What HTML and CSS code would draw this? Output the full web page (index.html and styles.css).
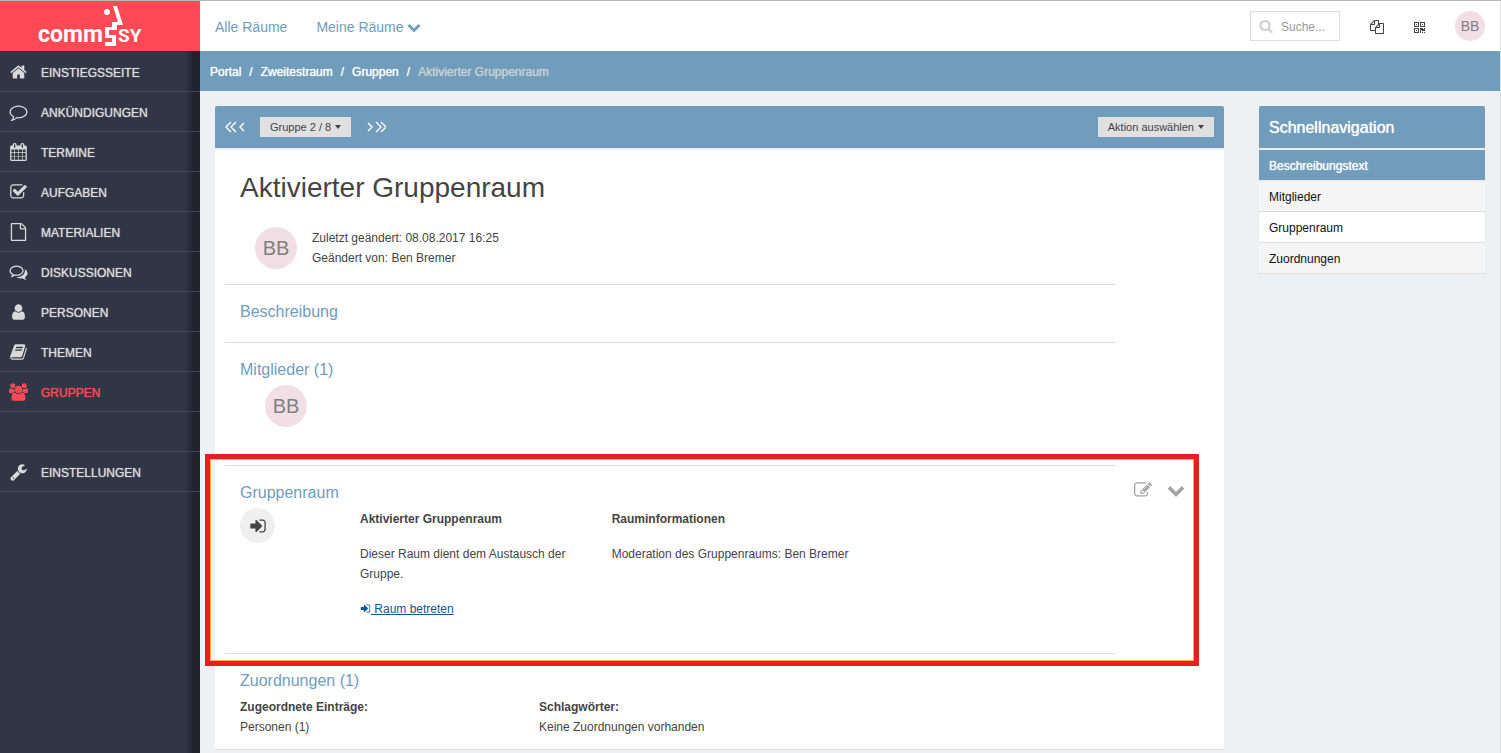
FILE: index.html
```html
<!DOCTYPE html>
<html lang="de">
<head>
<meta charset="utf-8">
<meta name="viewport" content="width=device-width, initial-scale=1">
<title>CommSy – Aktivierter Gruppenraum</title>
<link rel="stylesheet" href="styles.css">
</head>
<body>
<svg class="sprite" aria-hidden="true">
  <symbol id="home" viewBox="0 0 1792 1792"><path d="M1472 992v480q0 26-19 45t-45 19h-384v-384h-256v384h-384q-26 0-45-19t-19-45v-480q0-1 .5-3t.5-3l575-474 575 474q1 2 1 6zm223-69l-62 74q-8 9-21 11h-3q-13 0-21-7l-692-577-692 577q-12 8-24 7-13-2-21-11l-62-74q-8-10-7-23.500t11-21.500l719-599q32-26 76-26t76 26l244 204v-195q0-14 9-23t23-9h192q14 0 23 9t9 23v408l219 182q10 8 11 21.500t-7 23.500z"/></symbol>
  <symbol id="comment" viewBox="0 0 1792 1792"><path d="M896 384q-204 0-381.500 69.500t-282 187.500-104.500 255q0 112 71.500 213.500t201.500 175.500l87 50-27 96q-24 91-70 172 152-63 275-171l43-38 57 6q69 8 130 8 204 0 381.500-69.500t282-187.500 104.500-255-104.500-255-282-187.500-381.500-69.500zm896 512q0 174-120 321.500t-326 233-450 85.500q-70 0-145-8-198 175-460 242-49 14-114 22h-5q-15 0-27-10.500t-16-27.500v-1q-3-4-.5-12t2-10 4.500-9.500l6-9 7-8.500 8-9q7-8 31-34.500t34.500-38 31-39.500 32.500-51 27-59 26-76q-157-89-247.500-220t-90.500-281q0-174 120-321.500t326-233 450-85.500 450 85.500 326 233 120 321.500z"/></symbol>
  <symbol id="calendar" viewBox="0 0 1792 1792"><path d="M192 1664h288v-288h-288v288zm352 0h320v-288h-320v288zm-352-352h288v-320h-288v320zm352 0h320v-320h-320v320zm-352-384h288v-288h-288v288zm736 736h320v-288h-320v288zm-384-736h320v-288h-320v288zm768 736h288v-288h-288v288zm-384-352h320v-320h-320v320zm-352-864v-288q0-13-9.500-22.500t-22.500-9.500h-64q-13 0-22.500 9.500t-9.500 22.500v288q0 13 9.500 22.500t22.500 9.500h64q13 0 22.500-9.500t9.500-22.500zm736 864h288v-320h-288v320zm-384-384h320v-288h-320v288zm384 0h288v-288h-288v288zm32-480v-288q0-13-9.500-22.500t-22.500-9.500h-64q-13 0-22.500 9.500t-9.500 22.500v288q0 13 9.500 22.500t22.500 9.500h64q13 0 22.500-9.500t9.500-22.500zm384-64v1280q0 52-38 90t-90 38h-1408q-52 0-90-38t-38-90v-1280q0-52 38-90t90-38h128v-96q0-66 47-113t113-47h64q66 0 113 47t47 113v96h384v-96q0-66 47-113t113-47h64q66 0 113 47t47 113v96h128q52 0 90 38t38 90z"/></symbol>
  <symbol id="check" viewBox="0 0 1792 1792"><path d="M1472 930v318q0 119-84.500 203.500t-203.500 84.500h-832q-119 0-203.500-84.500t-84.500-203.500v-832q0-119 84.500-203.500t203.500-84.500h832q63 0 117 25 15 7 18 23 3 17-9 29l-49 49q-10 10-23 10-3 0-9-2-23-6-45-6h-832q-66 0-113 47t-47 113v832q0 66 47 113t113 47h832q66 0 113-47t47-113v-254q0-13 9-22l64-64q10-10 23-10 6 0 12 3 20 8 20 29zm231-489l-814 814q-24 24-57 24t-57-24l-430-430q-24-24-24-57t24-57l110-110q24-24 57-24t57 24l263 263 647-647q24-24 57-24t57 24l110 110q24 24 24 57t-24 57z"/></symbol>
  <symbol id="file" viewBox="0 0 1792 1792"><path d="M1596 380q28 28 48 76t20 88v1152q0 40-28 68t-68 28h-1344q-40 0-68-28t-28-68v-1600q0-40 28-68t68-28h896q40 0 88 20t76 48zm-444-244v376h376q-10-29-22-41l-313-313q-12-12-41-22zm384 1528v-1024h-416q-40 0-68-28t-28-68v-416h-768v1536h1280z"/></symbol>
  <symbol id="comments" viewBox="0 0 1792 1792"><path d="M704 384q-153 0-286 52t-211.500 141-78.500 191q0 82 53 158t149 132l97 56-35 84q34-20 62-39l44-31 53 10q78 14 153 14 153 0 286-52t211.500-141 78.500-191-78.500-191-211.500-141-286-52zm0-128q191 0 353.500 68.500t256.500 186.500 94 257-94 257-256.500 186.500-353.500 68.500q-86 0-176-16-124 88-278 128-36 9-86 16h-3q-11 0-20.500-8t-11.500-21q-1-3-1-6.500t.5-6.500 2-6l2.500-5 3.500-5.500 4-5 4.500-5 4-4.500q5-6 23-25t26-29.500 22.500-29 25-38.500 20.500-44q-124-72-195-177t-71-224q0-139 94-257t256.500-186.500 353.500-68.500zm822 1169q10 24 20.500 44t25 38.500 22.500 29 26 29.500 23 25q1 1 4 4.500t4.500 5 4 5 3.500 5.500l2.500 5 2 6 .5 6.500-1 6.500q-3 14-13 22t-22 7q-50-7-86-16-154-40-278-128-90 16-176 16-271 0-472-132 58 4 88 4 161 0 309-45t264-129q125-92 192-212t67-254q0-77-23-152 129 71 204 178t75 230q0 120-71 224.500t-195 176.500z"/></symbol>
  <symbol id="user" viewBox="0 0 1792 1792"><path d="M1536 1399q0 109-62.500 187t-150.500 78h-854q-88 0-150.500-78t-62.500-187q0-85 8.500-160.500t31.500-152 58.500-131 94-89 134.500-34.500q131 128 313 128t313-128q76 0 134.500 34.500t94 89 58.500 131 31.500 152 8.500 160.500zm-256-887q0 159-112.500 271.500t-271.500 112.500-271.500-112.500-112.500-271.500 112.500-271.500 271.500-112.500 271.500 112.500 112.500 271.500z"/></symbol>
  <symbol id="book" viewBox="0 0 1792 1792"><path d="M1703 478q40 57 18 129l-275 906q-19 64-76.500 107.500t-122.500 43.500h-923q-77 0-148.500-53.500t-99.500-131.500q-24-67-2-127 0-4 3-27t4-37q1-8-3-21.500t-3-19.500q2-11 8-21t16.500-23.500 16.500-23.500q23-38 45-91.500t30-91.500q3-10 .5-30t-.5-28q3-11 17-28t17-23q21-36 42-92t25-90q1-9-2.500-32t.5-28q4-13 22-30.500t22-22.500q19-26 42.500-84.500t27.500-96.500q1-8-3-25.500t-2-26.500q2-8 9-18t18-23 17-21q8-12 16.500-30.500t15-35 16-36 19.500-32 26.500-23.500 36-11.500 47.500 5.500l-1 3q38-9 51-9h761q74 0 114 56t18 130l-274 906q-36 119-71.500 153.500t-128.500 34.500h-869q-27 0-38 15-11 16-1 43 24 70 144 70h923q29 0 56-15.500t35-41.500l300-987q7-22 5-57 38 15 59 43zm-1064 2q-4 13 2 22.500t20 9.500h608q13 0 25.500-9.500t16.500-22.500l21-64q4-13-2-22.500t-20-9.500h-608q-13 0-25.500 9.500t-16.500 22.500zm-83 256q-4 13 2 22.500t20 9.500h608q13 0 25.500-9.500t16.500-22.500l21-64q4-13-2-22.500t-20-9.500h-608q-13 0-25.500 9.500t-16.500 22.500z"/></symbol>
  <symbol id="group" viewBox="0 0 1920 1792"><path d="M593 896q-162 5-265 128h-134q-82 0-138-40.500t-56-118.500q0-353 124-353 6 0 43.500 21t97.500 42.500 119 21.500q67 0 133-23-5 37-5 66 0 139 81 256zm1071 637q0 120-73 189.500t-194 69.500h-874q-121 0-194-69.500t-73-189.500q0-53 3.500-103.500t14-109 26.500-108.500 43-97.500 62-81 85.500-53.500 111.500-20q10 0 43 21.500t73 48 107 48 135 21.500 135-21.500 107-48 73-48 43-21.500q61 0 111.500 20t85.500 53.500 62 81 43 97.500 26.500 108.500 14 109 3.500 103.500zm-1024-1277q0 106-75 181t-181 75-181-75-75-181 75-181 181-75 181 75 75 181zm704 384q0 159-112.500 271.500t-271.500 112.500-271.500-112.500-112.500-271.500 112.500-271.500 271.500-112.500 271.500 112.500 112.500 271.500zm576 225q0 78-56 118.500t-138 40.500h-134q-103-123-265-128 81-117 81-256 0-29-5-66 66 23 133 23 59 0 119-21.500t97.500-42.500 43.500-21q124 0 124 353zm-128-609q0 106-75 181t-181 75-181-75-75-181 75-181 181-75 181 75 75 181z"/></symbol>
  <symbol id="wrench" viewBox="0 0 1792 1792"><path d="M448 1472q0-26-19-45t-45-19-45 19-19 45 19 45 45 19 45-19 19-45zm644-420l-682 682q-37 37-90 37-52 0-91-37l-106-108q-38-36-38-90 0-53 38-91l681-681q39 98 114.500 173.500t173.500 114.500zm634-435q0 39-23 106-47 134-164.500 217.500t-258.500 83.500q-185 0-316.500-131.500t-131.500-316.500 131.500-316.500 316.500-131.500q58 0 121.500 16.500t107.500 46.500q16 11 16 28t-16 28l-293 169v224l193 107q5-3 79-48.500t135.500-81 70.500-35.500q15 0 23.500 10t8.500 25z"/></symbol>
  <symbol id="down" viewBox="0 0 1792 1792"><path d="M1683 808l-742 741q-19 19-45 19t-45-19l-742-741q-19-19-19-45.500t19-45.500l166-165q19-19 45-19t45 19l531 531 531-531q19-19 45-19t45 19l166 165q19 19 19 45.500t-19 45.500z"/></symbol>
  <symbol id="edit" viewBox="0 0 1792 1792"><path d="M888 1184l116-116-152-152-116 116v56h96v96h56zm440-720q-16-16-33 1l-350 350q-17 17-1 33t33-1l350-350q17-17 1-33zm80 594v190q0 119-84.500 203.500t-203.500 84.500h-832q-119 0-203.500-84.500t-84.500-203.500v-832q0-119 84.500-203.500t203.500-84.500h832q63 0 117 25 15 7 18 23 3 17-9 29l-49 49q-14 14-32 8-23-6-45-6h-832q-66 0-113 47t-47 113v832q0 66 47 113t113 47h832q66 0 113-47t47-113v-126q0-13 9-22l64-64q15-15 35-7t20 29zm-96-738l288 288-672 672h-288v-288zm444 132l-92 92-288-288 92-92q28-28 68-28t68 28l152 152q28 28 28 68t-28 68z"/></symbol>
  <symbol id="enter" viewBox="0 0 1792 1792"><path d="M1312 896q0 26-19 45l-544 544q-19 19-45 19t-45-19-19-45v-288h-448q-26 0-45-19t-19-45v-384q0-26 19-45t45-19h448v-288q0-26 19-45t45-19 45 19l544 544q19 19 19 45zm352-352v704q0 119-84.500 203.500t-203.500 84.500h-320q-13 0-22.500-9.500t-9.500-22.500q0-4-1-20t-.5-26.500 3-23.500 10-19.500 20.500-6.500h320q66 0 113-47t47-113v-704q0-66-47-113t-113-47h-312l-11.500-1-11.500-3-8-5.500-7-9-2-13.500q0-4-1-20t-.5-26.500 3-23.500 10-19.500 20.500-6.500h320q119 0 203.500 84.500t84.500 203.500z"/></symbol>
  <symbol id="search" viewBox="0 0 1792 1792"><path d="M1216 832q0-185-131.500-316.500t-316.500-131.500-316.500 131.500-131.500 316.500 131.500 316.500 316.500 131.500 316.500-131.500 131.500-316.500zm512 832q0 52-38 90t-90 38q-54 0-90-38l-343-342q-179 124-399 124-143 0-273.500-55.500t-225-150-150-225-55.500-273.500 55.500-273.500 150-225 225-150 273.500-55.500 273.500 55.500 225 150 150 225 55.500 273.500q0 220-124 399l343 343q37 37 37 90z"/></symbol>
  <symbol id="files" viewBox="0 0 1792 1792"><path d="M1696 384q40 0 68 28t28 68v1216q0 40-28 68t-68 28h-960q-40 0-68-28t-28-68v-288h-544q-40 0-68-28t-28-68v-672q0-40 20-88t48-76l408-408q28-28 76-48t88-20h416q40 0 68 28t28 68v328q68-40 128-40h416zm-544 213l-299 299h299v-299zm-640-384l-299 299h299v-299zm196 647l316-316v-416h-384v416q0 40-28 68t-68 28h-416v640h512v-256q0-40 20-88t48-76zm956 804v-1152h-384v416q0 40-28 68t-68 28h-416v640h896z"/></symbol>
  <symbol id="qrcode" viewBox="0 0 11 11"><path fill-rule="evenodd" d="M0 0h5v5H0zM1 1v3h3V1zM2 2h1v1H2zM6 0h5v5H6zM7 1v3h3V1zM8 2h1v1H8zM0 6h5v5H0zM1 7v3h3V7zM2 8h1v1H2zM6 6h3v1h1V6h1v3H8V8H7v3H6zM8 10h1v1H8zM10 10h1v1h-1z"/></symbol>
</svg>

<div class="app">
  <div class="sidebar">
    <a class="logo" href="#" aria-label="CommSy">
      <svg width="108" height="46" viewBox="35 4 108 46">
        <text class="logo-text" x="38" y="42" font-size="23">comm</text>
        <text class="logo-text" x="118" y="42" font-size="19">SY</text>
        <circle cx="107" cy="12" r="3"/>
        <path class="logo-face" d="M113 6H117L123 25H117V30H109V35H116V46H105V42H112V38H105V27H112V22H118Z"/>
      </svg>
    </a>
    <nav class="menu">
      <a href="#"><svg class="icon"><use href="#home"/></svg>EINSTIEGSSEITE</a>
      <a href="#"><svg class="icon"><use href="#comment"/></svg>ANKÜNDIGUNGEN</a>
      <a href="#"><svg class="icon"><use href="#calendar"/></svg>TERMINE</a>
      <a href="#"><svg class="icon"><use href="#check"/></svg>AUFGABEN</a>
      <a href="#"><svg class="icon"><use href="#file"/></svg>MATERIALIEN</a>
      <a href="#"><svg class="icon"><use href="#comments"/></svg>DISKUSSIONEN</a>
      <a href="#"><svg class="icon"><use href="#user"/></svg>PERSONEN</a>
      <a href="#"><svg class="icon"><use href="#book"/></svg>THEMEN</a>
      <a class="active" href="#"><svg class="icon"><use href="#group"/></svg>GRUPPEN</a>
      <div class="spacer"></div>
      <a href="#"><svg class="icon"><use href="#wrench"/></svg>EINSTELLUNGEN</a>
    </nav>
  </div>

  <div class="page">
    <header class="topbar">
      <nav class="rooms">
        <a href="#">Alle Räume</a>
        <a href="#">Meine Räume <svg class="icon-small"><use href="#down"/></svg></a>
      </nav>
      <div class="tools">
        <label class="search">
          <svg class="icon-small"><use href="#search"/></svg>
          <input type="text" placeholder="Suche..." aria-label="Suche">
        </label>
        <a class="tool" href="#" aria-label="Zwischenablage"><svg class="icon-small"><use href="#files"/></svg></a>
        <a class="tool" href="#" aria-label="QR-Code"><svg class="icon-qr"><use href="#qrcode"/></svg></a>
        <a class="avatar small" href="#">BB</a>
      </div>
    </header>

    <nav class="breadcrumb" aria-label="Pfad">
      <a href="#">Portal</a><span>/</span><a href="#">Zweitestraum</a><span>/</span><a href="#">Gruppen</a><span>/</span><span class="current">Aktivierter Gruppenraum</span>
    </nav>

    <div class="content">
      <main class="main">
        <div class="card-head">
          <div class="pager">
            <a href="#" aria-label="Anfang"><svg width="20" height="12" viewBox="0 0 20 12"><path d="M6 1L1 6L6 11M11 1L6 6L11 11M19 2L15 6L19 10"/></svg></a>
            <button class="button" type="button">Gruppe 2 / 8<i class="caret"></i></button>
            <a href="#" aria-label="Ende"><svg width="20" height="12" viewBox="0 0 20 12"><path d="M2 2L6 6L2 10M10 1L15 6L10 11M15 1L20 6L15 11"/></svg></a>
          </div>
          <button class="button" type="button">Aktion auswählen<i class="caret"></i></button>
        </div>

        <div class="card">
          <h1>Aktivierter Gruppenraum</h1>
          <div class="meta">
            <span class="avatar">BB</span>
            <div class="meta-text">Zuletzt geändert: 08.08.2017 16:25<br>Geändert von: Ben Bremer</div>
          </div>

          <section class="section description">
            <h2>Beschreibung</h2>
          </section>

          <section class="section members">
            <h2>Mitglieder (1)</h2>
            <span class="avatar">BB</span>
          </section>

          <section class="section room">
            <h2>Gruppenraum</h2>
            <div class="room-grid">
              <a class="enter" href="#" aria-label="Raum betreten"><svg class="icon"><use href="#enter"/></svg></a>
              <div class="room-text">
                <p><strong>Aktivierter Gruppenraum</strong></p>
                <p>Dieser Raum dient dem Austausch der Gruppe.</p>
                <p><a class="link" href="#"><svg class="icon-inline"><use href="#enter"/></svg> Raum betreten</a></p>
              </div>
              <div class="room-text">
                <p><strong>Rauminformationen</strong></p>
                <p>Moderation des Gruppenraums: Ben Bremer</p>
              </div>
            </div>
            <div class="actions">
              <button type="button" aria-label="Bearbeiten"><svg class="icon"><use href="#edit"/></svg></button>
              <button type="button" aria-label="Aufklappen"><svg class="icon"><use href="#down"/></svg></button>
            </div>
            <div class="highlight"></div>
          </section>

          <section class="section relations">
            <h2>Zuordnungen (1)</h2>
            <div class="relations-grid">
              <div><strong>Zugeordnete Einträge:</strong><br>Personen (1)</div>
              <div><strong>Schlagwörter:</strong><br>Keine Zuordnungen vorhanden</div>
            </div>
          </section>
        </div>
      </main>

      <aside class="quick">
        <h2>Schnellnavigation</h2>
        <nav>
          <a class="current" href="#">Beschreibungstext</a>
          <a href="#">Mitglieder</a>
          <a href="#">Gruppenraum</a>
          <a href="#">Zuordnungen</a>
        </nav>
      </aside>
    </div>
  </div>
</div>
</body>
</html>
```

FILE: styles.css
```css
* {
  box-sizing: border-box;
}

body {
  margin: 0;
  background: #edf1f3;
  color: #444;
  font-family: "Liberation Sans", Arial, sans-serif;
  font-size: 12px;
  line-height: 20px;
}

a {
  color: inherit;
  text-decoration: none;
}

h1, h2, p {
  margin: 0;
  font-weight: normal;
}

button {
  border: 0;
  padding: 0;
  background: none;
  color: inherit;
  font: inherit;
}

svg {
  fill: currentColor;
  flex: none;
}

.sprite {
  position: absolute;
  width: 0;
  height: 0;
}

.icon {
  width: 18px;
  height: 18px;
}

.icon-small {
  width: 14px;
  height: 14px;
}

.icon-qr {
  width: 11px;
  height: 11px;
}

.icon-inline {
  width: 11px;
  height: 11px;
  vertical-align: -1px;
}

.app {
  display: flex;
  min-height: 100vh;
  border-top: 1px solid #b9b6b9;
  border-right: 1px solid #dcdfe0;
}

/* Sidebar */
.sidebar {
  flex: 0 0 200px;
  background: linear-gradient(to right, #313646 185px, #20232e 194px);
}

.logo {
  display: flex;
  height: 50px;
  padding: 3px 0 0 35px;
  background: #ff4a55;
  color: #fff;
}

.logo-text {
  font-family: Roboto, sans-serif;
  font-weight: bold;
}

.menu {
  padding-top: 1px;
}

.menu a,
.spacer {
  display: flex;
  align-items: center;
  gap: 13px;
  height: 40px;
  padding: 2px 9px 0;
  border-bottom: 1px solid #404555;
}

.menu a {
  color: #d9d9d9;
  text-shadow: 0 0 1px currentColor;
}

.menu .icon {
  width: 19px;
  margin-bottom: 2px;
}

.menu .active {
  color: #ff4a55;
}

/* Header */
.page {
  flex: 1;
  min-width: 0;
}

.topbar {
  display: flex;
  justify-content: space-between;
  align-items: center;
  height: 50px;
  padding: 0 15px;
  background: #fff;
}

.rooms {
  display: flex;
  gap: 29px;
  padding-top: 2px;
  color: #6f9dbb;
  font-size: 14px;
}

.rooms .icon-small {
  vertical-align: -2px;
}

.tools {
  display: flex;
  align-items: center;
}

.search {
  display: flex;
  align-items: center;
  gap: 8px;
  width: 90px;
  height: 30px;
  margin-right: 30px;
  padding: 0 0 0 8px;
  border: 1px solid #ddd;
  color: #ccc;
}

.search input {
  flex: 1;
  min-width: 0;
  border: 0;
  padding: 2px 0 0;
  outline: 0;
  background: none;
  color: #444;
  font: inherit;
}

.search input::placeholder {
  color: #999;
}

.tool {
  display: flex;
  margin-right: 30px;
  padding-top: 2px;
  color: #444;
}

.avatar {
  display: flex;
  flex: none;
  justify-content: center;
  align-items: center;
  width: 42px;
  height: 42px;
  border-radius: 50%;
  background: #f1dfe5;
  color: #808080;
  font-size: 20px;
}

.avatar.small {
  width: 30px;
  height: 30px;
  font-size: 14px;
}

.breadcrumb {
  display: flex;
  align-items: center;
  gap: 8px;
  height: 40px;
  padding: 2px 10px 0;
  background: #709dbb;
  color: #fff;
  text-shadow: 0 0 1px currentColor;
}

.breadcrumb .current {
  color: #c9d0d5;
}

.content {
  display: flex;
  align-items: flex-start;
  gap: 35px;
  padding: 15px 15px 2px;
}

/* Main card */
.main {
  flex: 1;
  min-width: 0;
}

.card-head {
  display: flex;
  justify-content: space-between;
  align-items: center;
  height: 42px;
  margin-bottom: 2px;
  padding: 0 10px;
  border-radius: 2px 2px 0 0;
  background: #709dbb;
}

.pager {
  display: flex;
  align-items: center;
  gap: 15px;
}

.pager a {
  display: flex;
  color: #fff;
}

.pager path {
  fill: none;
  stroke: currentColor;
  stroke-width: 1.4;
}

.button {
  height: 20px;
  padding: 0 10px;
  background: #e0e0e0;
  color: #444;
  font-size: 11px;
}

.caret {
  display: inline-block;
  margin-left: 4px;
  border: 3px solid transparent;
  border-top: 4px solid currentColor;
  border-bottom: 0;
  vertical-align: 2px;
}

.card {
  padding: 20px 109px 12px 10px;
  border-bottom: 1px solid #dcdfe0;
  background: #fff;
}

.card h1 {
  padding-left: 15px;
  font-size: 28px;
  line-height: 36px;
}

.meta {
  display: flex;
  gap: 15px;
  padding: 21px 30px 15px;
}

.meta-text {
  padding-top: 1px;
}

.section {
  position: relative;
  padding: 15px 0 0 15px;
  border-top: 1px solid #ddd;
}

.section h2 {
  color: #709dbb;
  font-size: 16px;
  line-height: 24px;
}

.description {
  padding-bottom: 18px;
}

.members {
  padding-bottom: 38px;
}

.members .avatar {
  margin: 3px 25px 0;
}

.room {
  padding-bottom: 34px;
}

.room-grid {
  display: grid;
  grid-template-columns: 120px 1fr 2fr;
  padding-top: 3px;
}

.room-text {
  display: flex;
  flex-direction: column;
  gap: 15px;
  padding: 1px 30px 0 0;
}

.enter {
  display: flex;
  justify-content: center;
  align-items: center;
  width: 35px;
  height: 35px;
  border-radius: 50%;
  background: #efefef;
}

.link {
  color: #0a5a96;
  text-decoration: underline;
}

.actions {
  position: absolute;
  top: 15px;
  left: 100%;
  display: flex;
  gap: 15px;
  padding-left: 19px;
  color: #a3a3a3;
}

.actions button {
  display: flex;
}

/* Frame drawn over the group room section */
.highlight {
  position: absolute;
  inset: -12px -84px -13px -20px;
  border: 5px solid #e81e25;
  box-shadow: inset 0 0 0 1px #fbb04c;
  pointer-events: none;
}

.relations-grid {
  display: grid;
  grid-template-columns: 299px 1fr;
  padding-top: 4px;
}

/* Quick navigation */
.quick {
  flex: 0 0 226px;
}

.quick h2 {
  margin-bottom: 2px;
  padding: 12px 10px 10px;
  border-radius: 2px 2px 0 0;
  background: #709dbb;
  color: #fff;
  font-size: 16px;
  text-shadow: 0 0 1px currentColor;
}

.quick nav a {
  display: block;
  padding: 6px 10px 4px;
  border-bottom: 1px solid #ddd;
  background: #fff;
  color: #111;
}

.quick nav a:nth-child(even) {
  background: #f5f5f5;
}

.quick nav .current {
  border-bottom-color: #e5e9eb;
  background: #709dbb;
  color: #fff;
  text-shadow: 0 0 1px currentColor;
}
```
